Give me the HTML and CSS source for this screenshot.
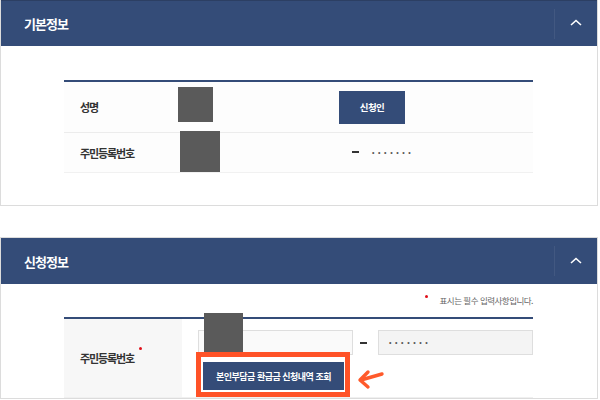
FILE: index.html
```html
<!DOCTYPE html>
<html lang="ko">
<head>
  <meta charset="UTF-8" />
  <meta name="viewport" content="width=device-width, initial-scale=1.0"/>
  <title>신청정보</title>
  <link rel="stylesheet" href="styles.css">
</head>
<body>
  <div class="wrap">
    <section class="panel panel-first">
      <div class="panel-head">
        <h2 class="panel-title">기본정보</h2>
        <button class="panel-toggle" aria-label="접기">
          <svg width="12" height="7" viewBox="0 0 12 7"><path d="M1 6 L6 1.5 L11 6" fill="none" stroke="#fff" stroke-width="1.6"/></svg>
        </button>
      </div>
      <div class="panel-body">
        <div class="info-table">
          <div class="info-row row-name">
            <span class="info-label">성명</span>
            <span class="mask mask-name"></span>
            <button class="btn-navy btn-small">신청인</button>
          </div>
          <div class="info-row row-id">
            <span class="info-label">주민등록번호</span>
            <span class="mask mask-id"></span>
            <span class="dash"></span>
            <span class="dots">•••••••</span>
          </div>
        </div>
      </div>
    </section>

    <section class="panel panel-second">
      <div class="panel-head">
        <h2 class="panel-title">신청정보</h2>
        <button class="panel-toggle" aria-label="접기">
          <svg width="12" height="7" viewBox="0 0 12 7"><path d="M1 6 L6 1.5 L11 6" fill="none" stroke="#fff" stroke-width="1.6"/></svg>
        </button>
      </div>
      <div class="panel-body body-form">
        <p class="note"><span class="req-star"></span>표시는 필수 입력사항입니다.</p>
        <div class="form-table">
          <div class="form-label">주민등록번호<span class="req-dot"></span></div>
          <div class="form-value">
            <span class="mask mask-form"></span>
            <div class="input-line">
              <input class="field" type="text" value="">
              <span class="dash"></span>
              <span class="field field-grey"><span class="dots">•••••••</span></span>
            </div>
            <div class="mark-line">
              <div class="mark-box">
                <button class="btn-navy btn-lookup">본인부담금 환급금 신청내역 조회</button>
              </div>
              <svg class="mark-arrow" width="28" height="24" viewBox="0 0 28 24">
                <path d="M25 6 L4 12" fill="none" stroke="#ff5a2b" stroke-width="3.4" stroke-linecap="round"/>
                <path d="M11 4 L3 12 L11 19" fill="none" stroke="#ff5a2b" stroke-width="3.4" stroke-linecap="round" stroke-linejoin="round"/>
              </svg>
            </div>
          </div>
        </div>
      </div>
    </section>
  </div>
</body>
</html>
```

FILE: styles.css
```css
 body {
   margin: 0;
   font-family: "Noto Sans CJK KR", "Noto Sans", sans-serif;
   background: #fff;
   color: #333;
 }
 .wrap {
   width: 598px;
 }
 .panel {
   border: 1px solid #dcdcdc;
   background: #fff;
 }
 .panel-first {
   border-top: 0;
 }
 .panel-second {
   margin-top: 31px;
 }
 .panel-head {
   display: flex;
   align-items: center;
   height: 46px;
   padding-left: 23px;
   background: #344c78;
 }
 .panel-first .panel-head {
   border-top: 1px solid #2c3f63;
   height: 45px;
 }
 .panel-title {
   flex: 1;
   margin: 0;
   color: #fff;
   font-size: 13px;
   font-weight: 700;
   letter-spacing: -1px;
 }
 .panel-toggle {
   display: flex;
   align-items: center;
   justify-content: center;
   width: 43px;
   height: 30px;
   padding: 0 0 2px 0;
   border: 0;
   border-left: 1px solid rgba(255, 255, 255, 0.07);
   background: none;
 }
 .panel-body {
   padding: 34px 64px 32px 63px;
 }

 /* 기본정보 */
 .info-table {
   border-top: 2px solid #344c78;
 }
 .info-row {
   display: flex;
   align-items: center;
   border-bottom: 1px solid #ececec;
   background: #fdfdfd;
 }
 .row-name {
   height: 50px;
 }
 .row-id {
   height: 39px;
   border-bottom-color: #f1f1f1;
 }
 .info-label {
   width: 98px;
   padding-left: 16px;
   font-size: 11px;
   font-weight: 700;
   letter-spacing: -1.1px;
   color: #333;
 }
 .mask {
   display: block;
   background: #5a5a5a;
 }
 .mask-name {
   width: 35px;
   height: 35px;
   margin-top: -5px;
 }
 .mask-id {
   width: 40px;
   height: 41px;
   margin-left: 2px;
   align-self: flex-start;
   margin-top: -2px;
 }
 .btn-navy {
   border: 0;
   background: #344c78;
   color: #fff;
   font-family: inherit;
   font-weight: 700;
   cursor: pointer;
 }
 .btn-small {
   width: 66px;
   height: 33px;
   margin-left: 126px;
   font-size: 9.5px;
   letter-spacing: -0.6px;
 }
 .dash {
   display: inline-block;
   width: 7px;
   height: 2px;
   background: #333;
 }
 .row-id .dash {
   margin-left: 132px;
   margin-top: -2px;
 }
 .dots {
   font-family: "Liberation Sans", sans-serif;
   font-size: 7px;
   letter-spacing: 3.6px;
   color: #555;
 }
 .row-id .dots {
   margin-left: 13px;
 }

 /* 신청정보 */
 .body-form {
   padding: 9px 64px 0 63px;
 }
 .note {
   display: flex;
   align-items: center;
   justify-content: flex-end;
   height: 13px;
   margin: 0 0 11px 0;
   font-size: 8.5px;
   letter-spacing: -0.5px;
   color: #666;
 }
 .req-star {
   width: 3px;
   height: 3px;
   margin-right: 12px;
   margin-top: -7px;
   border-radius: 50%;
   background: #e0101a;
 }
 .form-table {
   display: grid;
   grid-template-columns: 118px 1fr;
   border-top: 2px solid #344c78;
   border-bottom: 1px solid #f0f0f0;
 }
 .form-label {
   display: flex;
   align-items: center;
   padding-left: 16px;
   background: #f7f7f7;
   font-size: 11px;
   font-weight: 700;
   letter-spacing: -1.1px;
   color: #333;
 }
 .req-dot {
   width: 3px;
   height: 3px;
   margin: -19px 0 0 5px;
   border-radius: 50%;
   background: #e0101a;
 }
 .form-value {
   position: relative;
   padding: 11px 0 0 16px;
 }
 .mask-form {
   position: absolute;
   left: 22px;
   top: -6px;
   width: 39px;
   height: 39px;
 }
 .input-line {
   display: flex;
   align-items: center;
 }
 .field {
   box-sizing: border-box;
   width: 155px;
   height: 25px;
   margin: 0;
   border: 1px solid #dedede;
   background: #fafafa;
 }
 .field-grey {
   display: flex;
   align-items: center;
   padding-left: 10px;
   background: #f4f4f4;
 }
 .input-line .dash {
   margin: 0 11px 0 7px;
 }
 .mark-line {
   display: flex;
   align-items: flex-start;
 }
 .mark-box {
   box-sizing: border-box;
   width: 154px;
   height: 45px;
   margin: -3px 0 0 -2px;
   padding: 5px 1px 2px 2px;
   border: 5px solid #ff5227;
   background: #fff;
 }
 .btn-lookup {
   display: block;
   width: 100%;
   height: 28px;
   padding: 0;
   font-size: 9px;
   letter-spacing: -0.5px;
 }
 .mark-arrow {
   margin: 13px 0 0 7px;
 }
```
